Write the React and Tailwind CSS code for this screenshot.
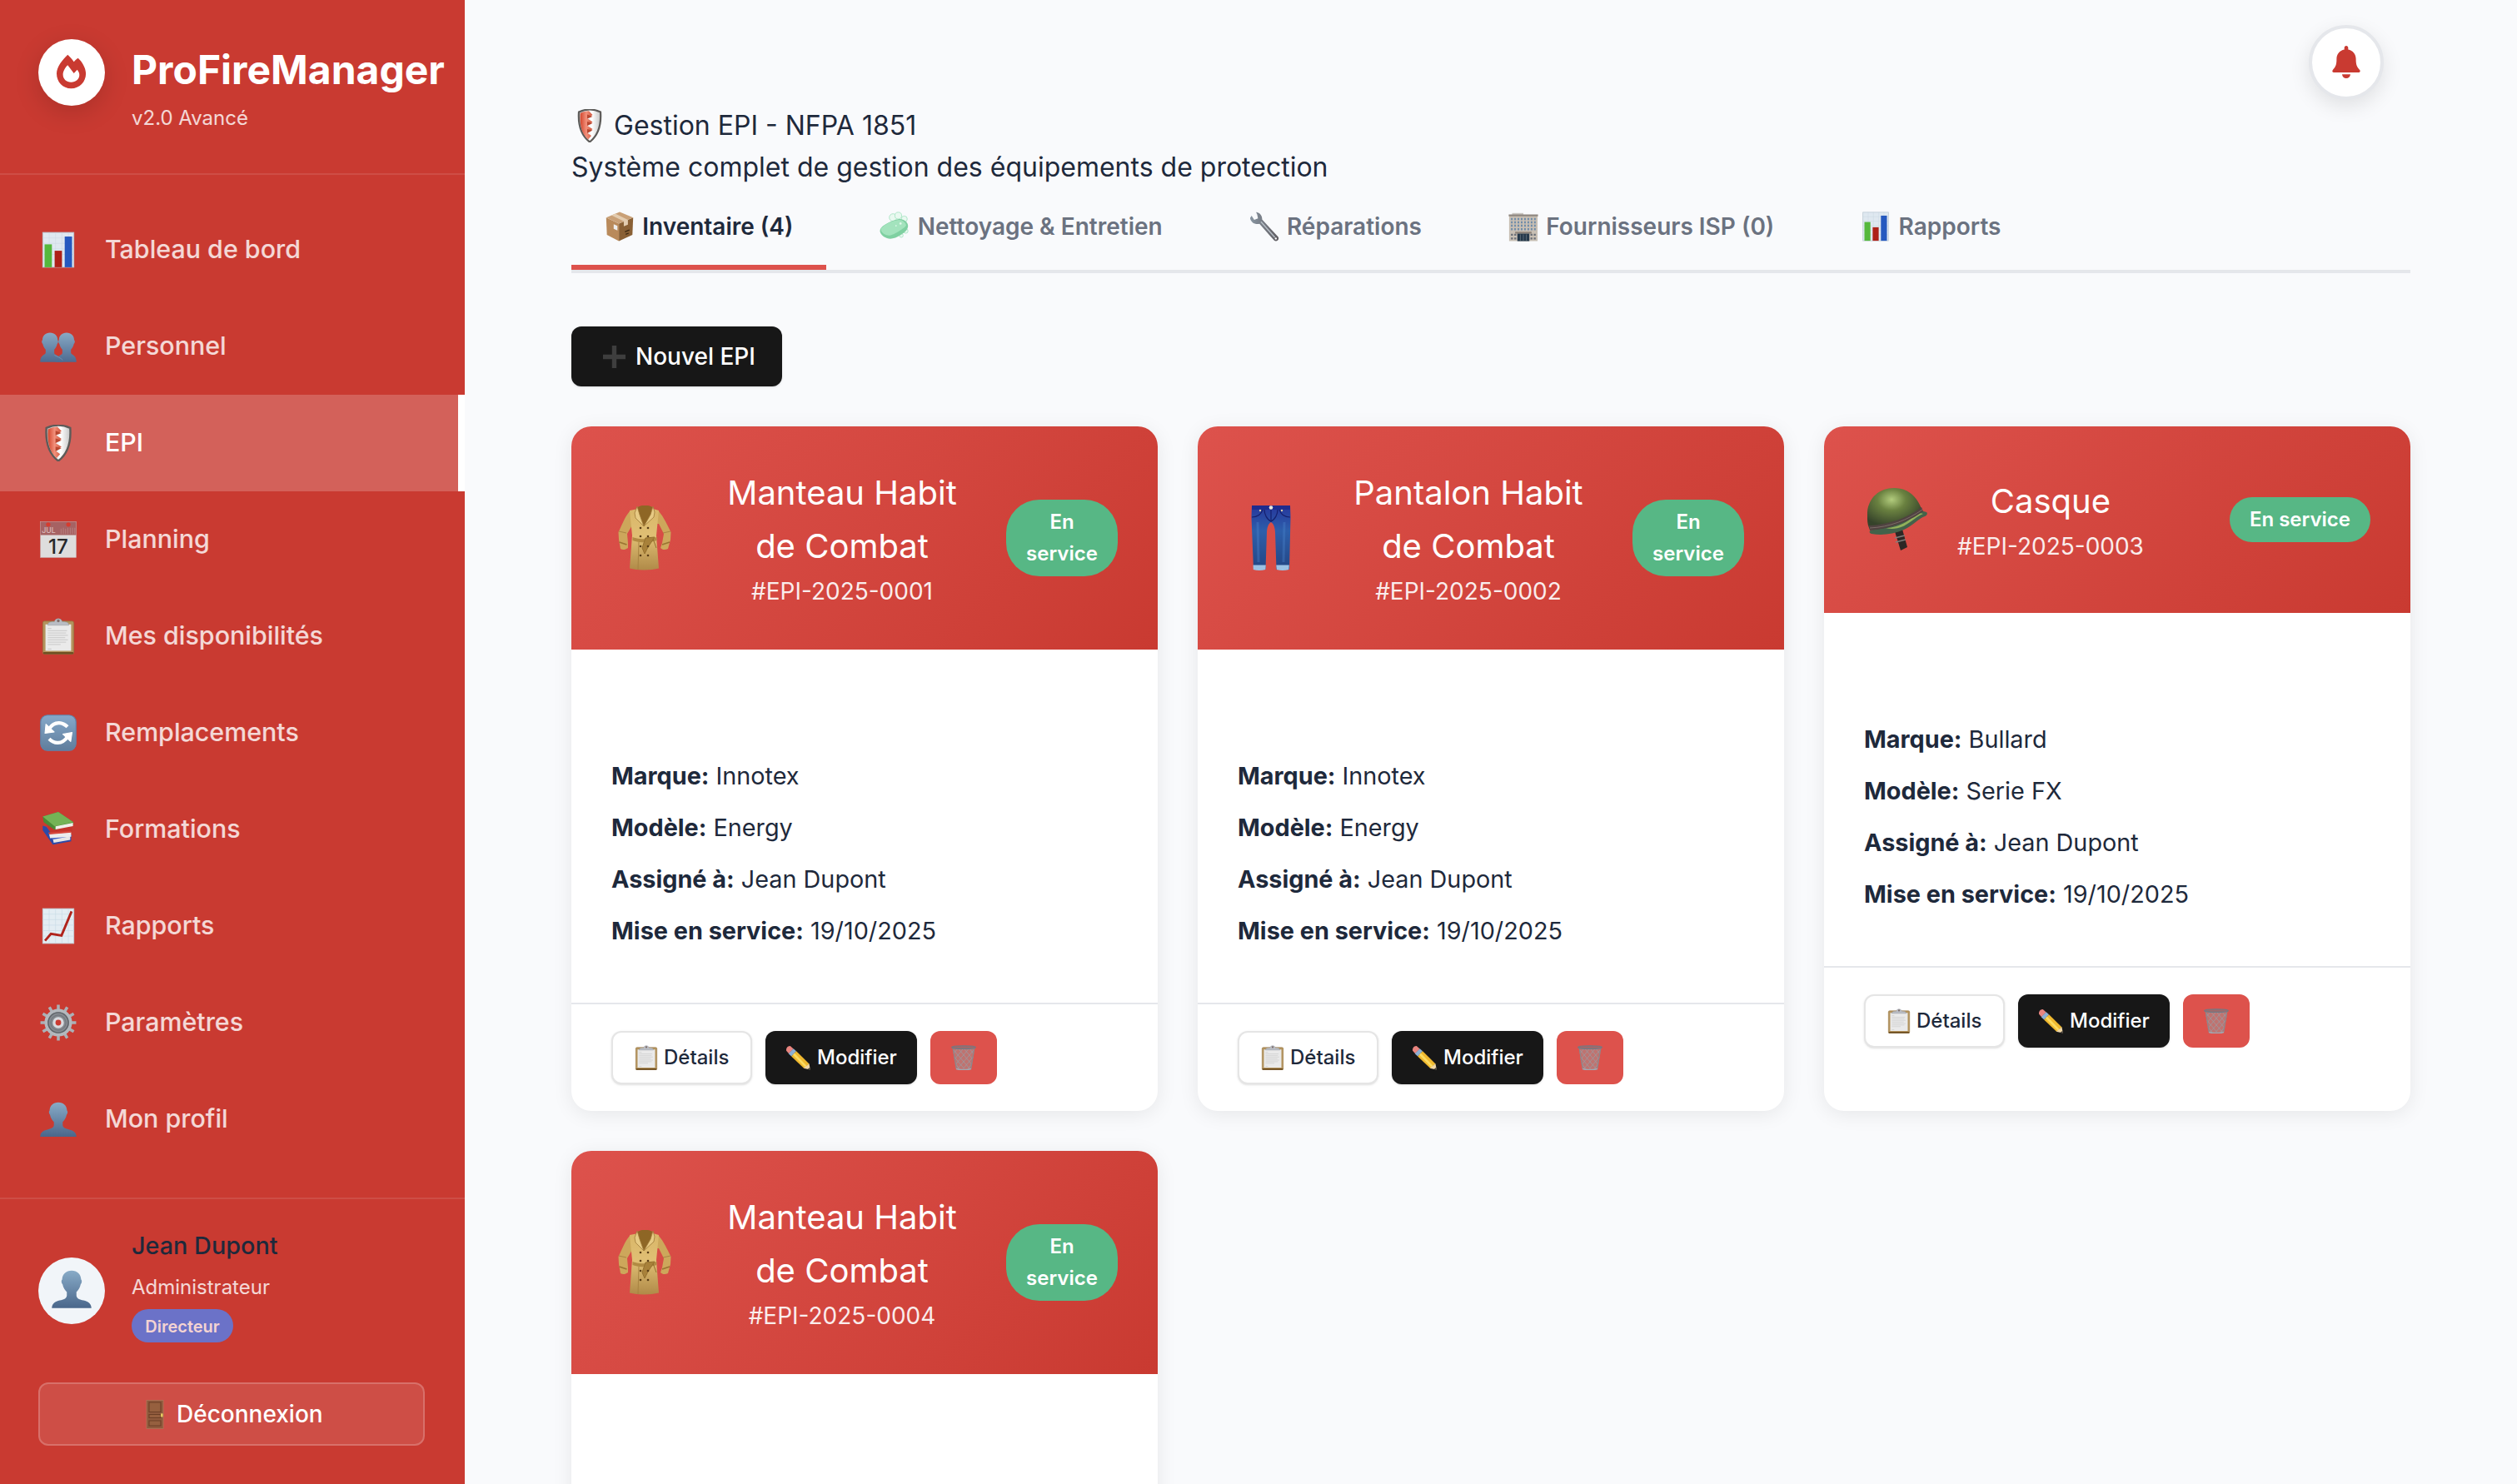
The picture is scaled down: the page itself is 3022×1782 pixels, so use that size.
import React from "react";

const Svg = ({ className, children, box = "0 0 40 40" }) => (
  <svg viewBox={box} className={className} fill="none" aria-hidden="true">
    {children}
  </svg>
);

const ChartIcon = ({ className }) => (
  <Svg className={className}>
    <rect x="3" y="1" width="34" height="38" fill="#dfe8f0" stroke="#b9c6d1" strokeWidth="0.8" />
    <path d="M3 7h34M3 13h34M3 19h34M3 25h34M3 31h34M10 1v38M17 1v38M24 1v38M31 1v38" stroke="#cbd8e4" strokeWidth="0.5" />
    <rect x="5" y="14" width="8" height="25" fill="#55b83c" />
    <rect x="16" y="21" width="8" height="18" fill="#ae2118" />
    <rect x="27" y="5.500" width="8" height="33.500" fill="#2659bf" />
  </Svg>
);

const bust = "M20 1.500c5.500 0 9.300 3.500 9.500 9 1 .6.9 3.400-.4 4.600-.8 4-2.600 6.200-4.300 7.900v3.400c.3 3 3.200 4 7.200 4.900 4.500 1 7.500 3 7.800 7.700H.2c.3-4.700 3.300-6.700 7.800-7.700 4-.9 6.900-1.900 7.200-4.900V23c-1.700-1.700-3.500-3.900-4.300-7.900-1.300-1.200-1.400-4-.4-4.600.2-5.500 4-9 9.500-9z";

const PersonIcon = ({ className }) => (
  <Svg className={className}>
    <defs>
      <linearGradient id="bust" x1="0" y1="0" x2="0" y2="1">
        <stop offset="0" stopColor="#88abc7" />
        <stop offset="1" stopColor="#4a678b" />
      </linearGradient>
    </defs>
    <path d={bust} fill="url(#bust)" />
  </Svg>
);

const PeopleIcon = ({ className }) => (
  <Svg className={className}>
    <defs>
      <linearGradient id="pair" x1="0" y1="0" x2="0" y2="1">
        <stop offset="0" stopColor="#88a9c5" />
        <stop offset="1" stopColor="#4d6b90" />
      </linearGradient>
    </defs>
    <g fill="url(#pair)">
      <path d="M29 5c5 0 8.300 3.500 8.300 8 1.200 1 .8 3.600-.3 4.300-.7 3-1.800 4.700-3.200 6.200v3.500c.8 2.600 5.700 1.700 6 10H17c.5-7 6.500-7 7.400-9.600v-3.900c-1.400-1.500-2.500-3.200-3.200-6.200-1.100-.7-1.400-3.300-.5-4.300C20.700 8.500 24 5 29 5z" />
      <path d="M11 5c5 0 8.300 3.500 8.300 8 .9 1 .6 3.600-.5 4.300-.7 3-1.800 4.700-3.200 6.200v3.900c.9 2.600 8.400 2.600 9.400 9.600H.2c.3-8.300 5.200-7.400 6-10v-3.500C4.800 22 3.700 20.300 3 17.300c-1.100-.7-1.500-3.300-.3-4.300C2.700 8.500 6 5 11 5z" />
    </g>
    <path d="M15.800 29.500c3 1.800 7 2.800 9 5.500" stroke="#7d9dba" strokeWidth="0.6" />
  </Svg>
);

const ShieldIcon = ({ className }) => (
  <Svg className={className}>
    <defs>
      <linearGradient id="shr" x1="0" x2="1">
        <stop offset="0" stopColor="#d3452c" />
        <stop offset="0.500" stopColor="#f2917c" />
        <stop offset="1" stopColor="#d05238" />
      </linearGradient>
      <linearGradient id="shw" x1="0" x2="1">
        <stop offset="0" stopColor="#bdbdbd" />
        <stop offset="0.600" stopColor="#ffffff" />
        <stop offset="1" stopColor="#c4c4c4" />
      </linearGradient>
    </defs>
    <path d="M7 3.500C15-.2 25-.2 33 3.500c1 14-1.500 27-13 36C8.500 30.500 6 17.500 7 3.500z" fill="url(#shw)" stroke="#5d5b59" strokeWidth="2.200" />
    <path d="M8.800 5C12 3 16 2.200 19 2.200L23.500 7 17 11l6.500 4.500L17 20l6.500 4L17 28.500l5 3.500-4 4.500C9.500 29 8 17 8.800 5z" fill="url(#shr)" />
    <path d="M17 6.500l6.500 2.500-6.500 2.500zM17 15l6.500 2-6.500 3zM17 24l6.500 1.500L17 29z" fill="#b8462f" />
  </Svg>
);

const CalendarIcon = ({ className }) => (
  <Svg className={className}>
    <rect x="0.500" y="0.500" width="39" height="39" fill="#dedddd" stroke="#c9b4b4" strokeWidth="0.500" />
    <rect x="0.500" y="0.500" width="39" height="14.500" fill="#a66263" />
    <circle cx="9" cy="3.500" r="2.400" fill="#d63c30" />
    <circle cx="31" cy="3.500" r="2.400" fill="#d63c30" />
    <text x="2" y="13" fontSize="8" fontFamily="Inter, sans-serif" fontWeight="500" fill="#dcbcbc">JUL</text>
    <path d="M23 8v6M25.500 7v7M28 8v6M30.500 7v7M33 7v7M35.500 7v7M38 7v7" stroke="#b98585" strokeWidth="0.800" />
    <text x="20" y="35" textAnchor="middle" fontSize="22" fontFamily="Inter, sans-serif" fontWeight="500" fill="#27282a">17</text>
  </Svg>
);

const ClipboardIcon = ({ className }) => (
  <Svg className={className}>
    <rect x="3" y="3.500" width="34" height="36" rx="2" fill="#b3935d" stroke="#8f6f3c" strokeWidth="0.600" />
    <rect x="3.400" y="37.200" width="33.200" height="2.300" rx="1" fill="#6f4f22" />
    <path d="M6 7h28v29H6z" fill="#eaeaea" />
    <path d="M8.500 14h21M8.500 16.500h20M8.500 19h22M8.500 21.500h19M8.500 24h22M8.500 26.500h20M8.500 29h14M8.500 11.500h4M8.500 34h4" stroke="#cfcfcf" strokeWidth="1" />
    <path d="M8.500 8c0-2.500 1.500-3.500 5-3.800h2.200a4.400 4.400 0 0 1 8.600 0h2.200c3.500.3 5 1.300 5 3.800z" fill="#b9bdc4" stroke="#8c9098" strokeWidth="0.400" />
    <circle cx="20" cy="3.200" r="1.500" fill="#7e6e6c" />
  </Svg>
);

const RefreshIcon = ({ className }) => (
  <Svg className={className}>
    <defs>
      <linearGradient id="ref" x1="0" y1="0" x2="0" y2="1">
        <stop offset="0" stopColor="#86a9ca" />
        <stop offset="1" stopColor="#5f7d9c" />
      </linearGradient>
    </defs>
    <rect x="0.700" y="0.700" width="38.600" height="38.600" rx="7.500" fill="url(#ref)" stroke="#5b84ad" strokeWidth="1" />
    <path d="M10 15.500C13 11 17 9 21 9.200c4 .2 6.500 1.800 9 4.300" stroke="#fff" strokeWidth="3.800" />
    <path d="M30 24.500C27 29 23 31 19 30.800c-4-.2-6.500-1.800-9-4.300" stroke="#fff" strokeWidth="3.800" />
    <path d="M6.500 10.500L5.500 20.500 15.500 19z M33.500 29.500L35 19.500 25 21.500z" fill="#fff" stroke="#fff" strokeWidth="1" strokeLinejoin="round" />
  </Svg>
);

const BooksIcon = ({ className }) => (
  <Svg className={className}>
    <path d="M3 16l4 1 9 12 18-3v7l-20 3.500L3 21z" fill="#2c4aa8" />
    <path d="M14 30l19-3.200v4.500L15 34.500z" fill="#e6e6e6" />
    <path d="M13 29.500L34 26l1 1-20.500 4z" fill="#3a5ec6" />
    <path d="M7 14l5 11 23-1v-6z" fill="#c4342b" />
    <path d="M10 25l24-2v5l-23 1.500z" fill="#ececec" />
    <path d="M9 23.500l25-2v2l-24 2z" fill="#d6473b" />
    <path d="M3 6L20 .8 36.500 12v2L16 20.500 4 12z" fill="#4b8a35" />
    <path d="M3 6L20 .8 36.500 12 16 16.500z" fill="#74b356" />
    <path d="M17 16.500l19-3.800v3.600L17 20z" fill="#f0efe9" />
  </Svg>
);

const GraphIcon = ({ className }) => (
  <Svg className={className}>
    <rect x="3" y="1" width="34" height="38" fill="#e3edf3" stroke="#c0cdd6" strokeWidth="0.800" />
    <path d="M3 7h34M3 13h34M3 19h34M3 25h34M3 31h34M10 1v38M17 1v38M24 1v38M31 1v38" stroke="#c8dbe6" strokeWidth="0.600" />
    <path d="M5.500 36L12 28.500l11.500 1.800L34.500 4" stroke="#b0241c" strokeWidth="2.600" />
  </Svg>
);

const GearIcon = ({ className }) => (
  <Svg className={className}>
    <g stroke="#abb0b6" strokeWidth="3.200">
      <path d="M20 .5v7M20 32.500v7M.5 20h7M32.500 20h7" />
      <path d="M20 .5v7M20 32.500v7M.5 20h7M32.500 20h7" transform="rotate(30 20 20)" />
      <path d="M20 .5v7M20 32.500v7M.5 20h7M32.500 20h7" transform="rotate(60 20 20)" />
    </g>
    <circle cx="20" cy="20" r="13.300" stroke="#b3b8bd" strokeWidth="3.500" fill="#858a90" />
    <circle cx="20" cy="20" r="11" stroke="#5e6368" strokeWidth="1.300" />
    <circle cx="20" cy="20" r="8.300" stroke="#73787e" strokeWidth="1" />
    <circle cx="20" cy="20" r="4.600" stroke="#d8dbdf" strokeWidth="3" fill="#c93a31" />
  </Svg>
);

const DoorIcon = ({ className }) => (
  <Svg className={className} box="0 0 24 40">
    <rect x="0.500" y="0.500" width="23" height="39" fill="#8f5a3d" stroke="#b07a5c" strokeWidth="0.800" />
    <path d="M4 3.500h16v13H4zM4 20h16v4.500H4zM4 28.500h16v7H4z" fill="#96603f" stroke="#6c3f26" strokeWidth="1.200" />
    <rect x="20" y="18.500" width="3" height="5" rx="1" fill="#e6c860" />
  </Svg>
);

const BoxIcon = ({ className }) => (
  <Svg className={className}>
    <path d="M2 8l17 8v23.500L3 31z" fill="#b98a5b" />
    <path d="M38 8l-19 8v23.500L37 31z" fill="#8a6035" />
    <path d="M2 8L20 .5 38 8l-19 8.200z" fill="#c9a077" />
    <path d="M9 5l5-2.200L31 11v6.500l-5.500 2.300V13z" fill="#e3ccb0" />
    <path d="M12 17l5 2.200v6L12 23z" fill="#eee" />
    <path d="M27 27l6-2.500M28 30.500l4-1.600" stroke="#3c2812" strokeWidth="1.400" />
  </Svg>
);

const SoapIcon = ({ className }) => (
  <Svg className={className}>
    <g stroke="#a9e4c4" strokeWidth="1" fill="#e9f9f0">
      <circle cx="18" cy="8" r="5" />
      <circle cx="25" cy="5.500" r="4.500" />
      <circle cx="33" cy="10" r="4" />
      <circle cx="35" cy="26" r="3" />
      <circle cx="29" cy="32" r="2.500" />
    </g>
    <path d="M2 22C6 17 16 12 26 10c6-.5 12 4 12 9 0 5-4 9-10 12.500-6 4-13 6-18 4C3 33-2 27 2 22z" fill="#7fd0a1" />
    <path d="M2.500 22C7 17 17 12 26 11c5 0 9 4 9.500 7.500-3 4.500-18 13.500-23 13.500S-.5 27 2.500 22z" fill="#a3e3bd" />
    <circle cx="28" cy="16" r="1.500" fill="#dff8e9" />
    <circle cx="22" cy="19" r="1" fill="#dff8e9" />
  </Svg>
);

const WrenchIcon = ({ className }) => (
  <Svg className={className}>
    <defs>
      <linearGradient id="wr" x1="0" y1="0" x2="1" y2="0">
        <stop offset="0" stopColor="#8996a2" />
        <stop offset="1" stopColor="#5f5b60" />
      </linearGradient>
    </defs>
    <path d="M9 .8c4 .2 8.500 4 8 9.700L38.500 34c2 3-1.500 6.800-5 5L13.500 16.500C7 18 1.500 13.500 1 8.500l2-3 3.500 5.700 5-2-1-5z" fill="url(#wr)" />
    <path d="M15.500 13.500L34 34.500" stroke="#b7bfc6" strokeWidth="1.600" />
    <circle cx="35.300" cy="36" r="1.300" fill="#fff" />
  </Svg>
);

const BuildingIcon = ({ className }) => (
  <Svg className={className}>
    <path d="M5 2h15v3H5z" fill="#c9c5c0" />
    <path d="M1 4.500h38v35H1z" fill="#c8bfb4" />
    <path d="M.5 4h39v2.500H.5z" fill="#8f8780" />
    <path d="M3.500 10h33M3.500 14.500h33M3.500 19h33M3.500 23.500h33" stroke="#6f8caa" strokeWidth="2.800" strokeDasharray="2.200 2.200" />
    <path d="M3.500 31h7M3.500 36h7M29.500 31h7M29.500 36h7" stroke="#6a6f78" strokeWidth="2.500" strokeDasharray="2.600 1.800" />
    <path d="M9 27h22v2.500H9z" fill="#8d8178" />
    <path d="M12 29.500h16v10H12z" fill="#25384a" />
    <path d="M16 30.500v9M20 30.500v9M24 30.500v9" stroke="#7b8790" strokeWidth="0.700" />
  </Svg>
);

const PlusIcon = ({ className }) => (
  <Svg className={className}>
    <path d="M16 0h8v16h16v8H24v16h-8V24H0v-8h16z" fill="#3e3e3e" />
  </Svg>
);

const PencilIcon = ({ className }) => (
  <Svg className={className}>
    <path d="M1.500 9C.5 5 4 .8 8 1.500l5 4.500L5.500 13.500z" fill="#e9857f" />
    <path d="M5 13.500L13 5.500l4.500 4L9.500 18z" fill="#8db0d4" />
    <path d="M9.500 18l8-8.500L38 30l-8.500 7z" fill="#f0b92f" />
    <path d="M12 15.500l2.500-2.700L34 33l-2.500 2.200z" fill="#fbdc63" />
    <path d="M29 37l9-7.500 1.800 9.700z" fill="#f1d7a6" />
    <path d="M35.500 38.500l3.700-3 .8 4.500z" fill="#3f3a36" />
  </Svg>
);

const TrashIcon = ({ className }) => (
  <Svg className={className}>
    <path d="M2 4h36l-5.500 34h-25z" fill="#bf7370" />
    <path d="M4 8l26 30M11 5l22 26M20 5l14 17M29 5l7 9M5 19l16 19M7 30l6 8M36 8L10 38M29 5L7 31M20 5L5 23M11 5L4 13M35 19L19 38M33 30l-6 8" stroke="#989ea4" strokeWidth="1" />
    <path d="M3 5l5.500 33M37 5l-5.500 33" stroke="#85898e" strokeWidth="1.400" />
    <ellipse cx="20" cy="3.500" rx="19" ry="2.300" fill="#a06a6a" stroke="#6f7a85" strokeWidth="1.600" />
    <path d="M8 38c7 1.800 17 1.800 24 0" stroke="#9fa9b2" strokeWidth="2.400" />
  </Svg>
);

const CoatIcon = ({ className }) => (
  <Svg className={className} box="0 0 64 78">
    <defs>
      <linearGradient id="coat" x1="0" y1="0" x2="0" y2="1">
        <stop offset="0" stopColor="#d9b668" />
        <stop offset="0.450" stopColor="#e0bf74" />
        <stop offset="1" stopColor="#b08a48" />
      </linearGradient>
    </defs>
    <path d="M14 7L22 5h20l7 2c6 7 10 16 14.500 25l-.5 9-3 11c-4 2-7 1-9-1l2-6 2-11-6-12H18l-7 12 1 11 0 6c-3 2-6 3-9 1L1 41 .5 32C5 23 8 14 14 7z" fill="#cda75b" />
    <path d="M14 6L24 4l8 6 10-6 7 2-3 30 3 39.500c-10 2.500-25 2.500-35 0L17 36z" fill="url(#coat)" />
    <path d="M24 2c4-3 13-3 17 0l-1 9-9 14-7-14z" fill="#8e6625" />
    <path d="M23 1l3 10 5 14-10-10-1-6zM42 1l-3 10-8 14 12-11 1-6z" fill="#e7ca84" stroke="#9f7a38" strokeWidth="0.800" />
    <path d="M17.500 38c9 3 19 3 29 0v4c-10 3-20 3-29 0z" fill="#b18b43" />
    <path d="M33 39l-4 12 3 7 4-8 8-12zM42 40l4 11" fill="#a8813a" stroke="#94702f" strokeWidth="1" />
    <path d="M25 44l-1 33M1 31l9 2M63 31l-9 2" stroke="#a5803f" strokeWidth="0.900" />
    <path d="M1.500 44l9 3M62 44l-9 3" stroke="#9a7432" strokeWidth="1.800" />
    <g fill="#5a3d16">
      <circle cx="27" cy="27" r="1.300" /><circle cx="36" cy="27" r="1.300" />
      <circle cx="27" cy="37" r="1.300" /><circle cx="36" cy="37" r="1.300" />
      <circle cx="27" cy="49" r="1.300" /><circle cx="36" cy="49" r="1.300" />
      <circle cx="27" cy="60" r="1.300" /><circle cx="36" cy="60" r="1.300" />
    </g>
  </Svg>
);

const JeansIcon = ({ className }) => (
  <Svg className={className} box="0 0 48 78">
    <defs>
      <linearGradient id="jean" x1="0" y1="0" x2="0" y2="1">
        <stop offset="0" stopColor="#26369c" />
        <stop offset="0.400" stopColor="#2d5fab" />
        <stop offset="1" stopColor="#234583" />
      </linearGradient>
    </defs>
    <path d="M1 0h46l.5 14L46 77H30.500L29 32c-.5-7-2-10-5-12-3 2-4.500 5-5 12l-1.500 45H3L.5 14z" fill="url(#jean)" />
    <path d="M1 0h46v5H1z" fill="#1f2b8e" />
    <path d="M1 14c7 0 11-3 13-9M47 14c-7 0-11-3-13-9M24 5v15M16 5c0 5 3 12 8 14M32 5c0 5-3 12-8 14" stroke="#15206e" strokeWidth="1.200" />
    <path d="M8 20l1 48M40 20l-1 48" stroke="#4d87cd" strokeWidth="3" opacity="0.350" />
    <path d="M2.500 71.500h15.300l-.4 5.500c-5 1.200-10 1.200-14.600 0zM30.200 71.500h15.600l-.4 5.500c-5 1.200-10 1.200-14.600 0z" fill="#9bc1e4" />
    <circle cx="24" cy="2.500" r="2.300" fill="#e9e5dc" />
    <circle cx="11" cy="6" r="1.200" fill="#d9c9a5" /><circle cx="37" cy="6" r="1.200" fill="#d9c9a5" />
  </Svg>
);

const HelmetIcon = ({ className }) => (
  <Svg className={className} box="0 0 72 76">
    <defs>
      <radialGradient id="helm" cx="0.450" cy="0.280" r="0.650">
        <stop offset="0" stopColor="#b2cc7d" />
        <stop offset="0.400" stopColor="#6a8140" />
        <stop offset="1" stopColor="#35422a" />
      </radialGradient>
    </defs>
    <path d="M32 49l9-3 7 25-8 4z" fill="#2d2725" />
    <path d="M33 60l12-3M34 65l12-3" stroke="#817d7b" strokeWidth="1.600" />
    <path d="M4 51l60-24 7 2c2 2 0 4-2 5-8 3-14 11-25 16-14 6-27 7-39 5-3-1-3-3-1-4z" fill="#44624a" />
    <path d="M22 48c15 0 28-8 37-17 3-1 6-1 8 0-8 3-14 10-24 15-7 3-14 4-21 2z" fill="#92b05a" />
    <path d="M0 37C-2 15 12 0 32 0c16 0 27 9 33 25C52 39 26 50 3 50 1 46 0 42 0 37z" fill="url(#helm)" />
    <path d="M2 45c24-1 46-9 63-22l2 5C51 40 27 49 3 51z" fill="#4f4340" />
    <path d="M3 48c24-1 46-10 63-22" stroke="#806f6b" strokeWidth="0.900" />
  </Svg>
);

const FlameLogo = () => (
  <Svg className="size-20" box="0 0 80 80">
    <path fillRule="evenodd" fill="#c93a31" d="M35.300 18.700C37.500 20.500 40.500 24 42.700 27.300c1.500-1.900 3-3.500 5-4.600 4.500 4 9.400 11.500 9.400 18.600 0 10.200-7.500 18-17.700 18S22 51.500 22 41.300c0-7.500 6.500-16.300 13.300-22.600zM35.300 31.300c-3 2.700-5.700 7.300-5.700 11.200 0 5.500 4.300 9.200 9.800 9.200s9.900-3.700 9.900-8.700c0-2.300-1-4.500-2.600-6.300L42.700 41z" />
  </Svg>
);

const BellIcon = () => (
  <Svg className="h-10 w-9" box="9 11 36 40">
    <path fill="#c93a31" d="M27 11c1.400 0 2.300 1 2.300 2.300v2.200c5.700 1.100 9.300 5.600 9.300 11.300 0 6.200.8 9.200 4.300 13 1.500 1.600.7 3.200-1.200 3.200H12.200c-1.900 0-2.600-1.600-1.200-3.200 3.600-3.800 4.400-6.800 4.400-13 0-5.700 3.600-10.200 9.300-11.300v-2.200c0-1.300.9-2.300 2.300-2.300zM22 45.200h10c-.3 2.900-2.200 4.800-5 4.800s-4.700-1.900-5-4.800z" />
  </Svg>
);

const navItems = [
  ["Tableau de bord", ChartIcon],
  ["Personnel", PeopleIcon],
  ["EPI", ShieldIcon],
  ["Planning", CalendarIcon],
  ["Mes disponibilités", ClipboardIcon],
  ["Remplacements", RefreshIcon],
  ["Formations", BooksIcon],
  ["Rapports", GraphIcon],
  ["Paramètres", GearIcon],
  ["Mon profil", PersonIcon],
];

const tabs = [
  ["Inventaire (4)", BoxIcon],
  ["Nettoyage & Entretien", SoapIcon],
  ["Réparations", WrenchIcon],
  ["Fournisseurs ISP (0)", BuildingIcon],
  ["Rapports", ChartIcon],
];

const items = [
  { name: "Manteau Habit de Combat", id: "0001", brand: "Innotex", model: "Energy", icon: "coat" },
  { name: "Pantalon Habit de Combat", id: "0002", brand: "Innotex", model: "Energy", icon: "jeans" },
  { name: "Casque", id: "0003", brand: "Bullard", model: "Serie FX", icon: "helmet", short: true },
  { name: "Manteau Habit de Combat", id: "0004", brand: "Innotex", model: "Energy", icon: "coat" },
];

function Sidebar() {
  return (
    <aside className="flex h-full w-[558px] shrink-0 flex-col bg-[#c93a31]">
      <div className="flex h-[210px] items-start gap-8 border-b-2 border-white/10 pl-[46px] pt-[46px]">
        <div className="mt-px size-20 rounded-full bg-white shadow-[0_8px_30px_rgba(0,0,0,0.15)]">
          <FlameLogo />
        </div>
        <div>
          <div className="text-[48px] font-bold leading-[76px] text-white">ProFireManager</div>
          <div className="mt-px text-2xl leading-[38px] text-white/80">v2.0 Avancé</div>
        </div>
      </div>
      <nav className="flex flex-col pt-8">
        {navItems.map(([label, Icon]) => {
          const active = label === "EPI";
          return (
            <div
              key={label}
              className={
                active
                  ? "flex h-[116px] items-center border-r-8 border-white bg-white/20 pl-12 text-white"
                  : "flex h-[116px] items-center pl-12 text-white/80"
              }
            >
              <Icon className="mr-[34px] size-11" />
              <span className="pb-0.5 text-[30.4px] font-medium leading-none">{label}</span>
            </div>
          );
        })}
      </nav>
      <div className="mt-auto h-[344px] border-t-2 border-white/10 px-[46px] pt-[33px]">
        <div className="flex gap-8">
          <div className="mt-[37px] flex size-20 items-center justify-center rounded-full bg-[#f1f5f9]">
            <PersonIcon className="mb-1 size-12" />
          </div>
          <div>
            <div className="text-[28.8px] font-medium leading-[46px] text-[#1e293b]">Jean Dupont</div>
            <div className="mt-2 text-2xl leading-[38px] text-white/80">Administrateur</div>
            <div className="mt-[7px] flex h-10 w-[122px] items-center justify-center rounded-[20px] bg-[#6b72c8] pt-0.5 text-[20px] font-semibold text-[#f4d4d2]">
              Directeur
            </div>
          </div>
        </div>
        <div className="mt-12 flex h-[76px] w-[464px] items-center rounded-xl border-2 border-white/20 bg-white/10 pl-[127px] text-[28px] font-medium text-white">
          <DoorIcon className="mr-[15px] h-[35px] w-[22px]" />
          Déconnexion
        </div>
      </div>
    </aside>
  );
}

function Row({ label, value }) {
  return (
    <p className="mb-4 leading-[46px]">
      <strong className="font-bold">{label}</strong> {value}
    </p>
  );
}

function Card({ item }) {
  return (
    <article className="overflow-hidden rounded-3xl bg-white shadow-[0_4px_24px_rgba(0,0,0,0.08)]">
      <div
        className={
          item.short
            ? "flex h-56 items-center bg-linear-[135deg,#dd524c,#c93a31] px-12 text-white"
            : "flex h-[268px] items-center bg-linear-[135deg,#dd524c,#c93a31] px-12 text-white"
        }
      >
        <div className="flex w-20 shrink-0 justify-center">
          {item.icon === "coat" && <CoatIcon className="h-[78px] w-16" />}
          {item.icon === "jeans" && <JeansIcon className="h-[78px] w-12" />}
          {item.icon === "helmet" && <HelmetIcon className="h-[76px] w-[72px]" />}
        </div>
        <div className={item.short ? "ml-8 text-center" : "ml-8 w-[330px] text-center"}>
          <h3 className={item.short ? "text-[40px] leading-[64px]" : "mx-auto w-[300px] text-[40px] leading-[64px]"}>{item.name}</h3>
          <p className="text-[28px] leading-[45px] opacity-90">#EPI-2025-{item.id}</p>
        </div>
        <span
          className={
            item.short
              ? "ml-auto rounded-[40px] bg-[#57b785] px-6 py-2 text-2xl font-semibold leading-[38px]"
              : "ml-auto w-[134px] rounded-[40px] bg-[#57b785] px-6 py-2 text-center text-2xl font-semibold leading-[38px]"
          }
        >
          En service
        </span>
      </div>
      <div className="px-12 pb-[47px] pt-[129px] text-[28.8px] text-[#1e293b]">
        <Row label="Marque:" value={item.brand} />
        <Row label="Modèle:" value={item.model} />
        <Row label="Assigné à:" value="Jean Dupont" />
        <Row label="Mise en service:" value="19/10/2025" />
      </div>
      <div className="flex gap-4 border-t-2 border-[#e5e7eb] px-12 py-8 text-2xl font-medium">
        <button className="flex h-16 w-[169px] items-center rounded-xl border-2 border-[#e5e5e5] bg-white pl-[25px] text-[#1e293b] shadow-sm">
          <ClipboardIcon className="mr-1.5 size-[30px]" />
          Détails
        </button>
        <button className="flex h-16 w-[182px] items-center rounded-xl bg-[#171717] pl-6 text-white shadow-sm">
          <PencilIcon className="mr-2 size-[30px]" />
          Modifier
        </button>
        <button className="flex h-16 w-20 items-center justify-center rounded-xl bg-[#dd524c]">
          <TrashIcon className="size-[30px]" />
        </button>
      </div>
    </article>
  );
}

export default function App() {
  return (
    <div className="flex h-[1782px] w-[3022px] overflow-hidden bg-[#f9fafc] font-['Inter',sans-serif]">
      <Sidebar />
      <main className="relative flex-1 px-32 pt-[126px] text-[#1e293b]">
        <div className="absolute left-[2214px] top-[30px] flex size-[90px] items-center justify-center rounded-full border-4 border-[#e5e7eb] bg-white shadow-[0_8px_24px_rgba(0,0,0,0.1)]">
          <BellIcon />
        </div>
        <div className="flex h-[50px] items-center text-[32px]">
          <ShieldIcon className="ml-0.5 mr-[9px] size-10" />
          Gestion EPI - NFPA 1851
        </div>
        <p className="text-[32px] leading-[50px]">Système complet de gestion des équipements de protection</p>
        <div className="flex gap-6 border-b-4 border-[#e5e7eb]">
          {tabs.map(([label, Icon], i) => (
            <div
              key={label}
              className={
                i === 0
                  ? "flex items-center border-b-[6px] border-[#dd524c] px-10 pb-[23px] pt-[23px] text-[28px] font-semibold leading-[46px]"
                  : "flex items-center border-b-[6px] border-transparent px-10 pb-[23px] pt-[23px] text-[28px] font-semibold leading-[46px] text-[#6b7280]"
              }
            >
              <Icon className="mr-[9.300px] size-9" />
              {label}
            </div>
          ))}
        </div>
        <button className="mt-16 flex h-[72px] w-[253px] items-center rounded-xl bg-[#171717] pl-[38px] text-[28px] font-medium text-white shadow-sm">
          <PlusIcon className="mr-3 size-[27px]" />
          Nouvel EPI
        </button>
        <section className="mt-12 grid grid-cols-3 gap-12">
          {items.map((item) => (
            <Card key={item.id} item={item} />
          ))}
        </section>
      </main>
    </div>
  );
}
